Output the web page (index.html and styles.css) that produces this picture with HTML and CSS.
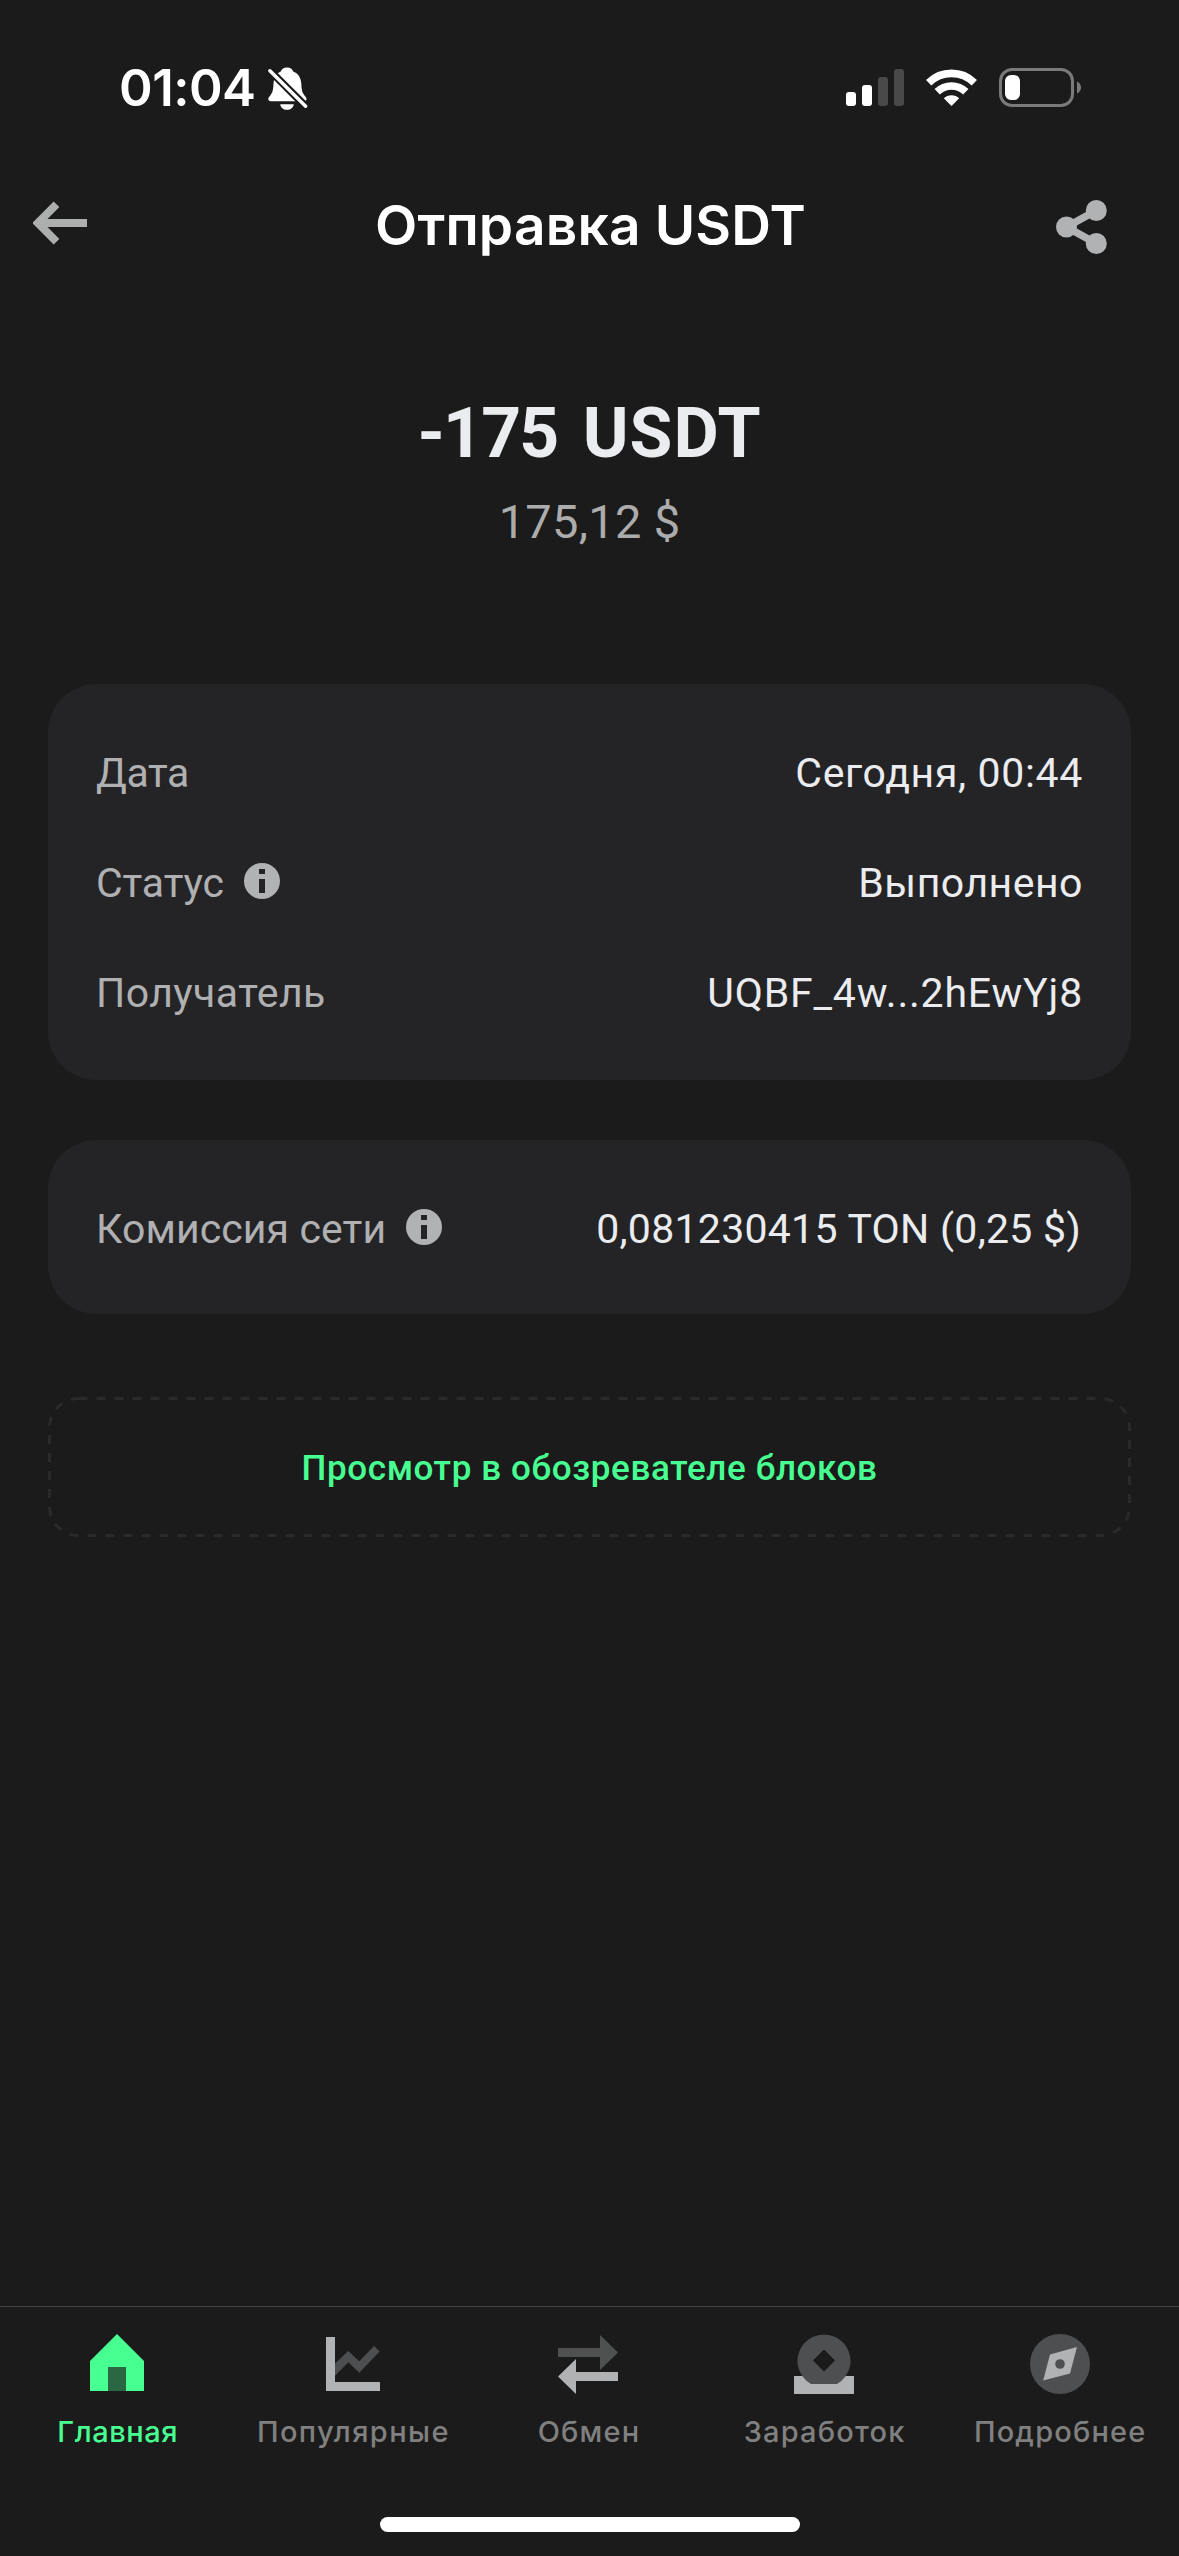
FILE: index.html
```html
<!DOCTYPE html>
<html lang="ru">
<head>
<meta charset="utf-8">
<title>Отправка USDT</title>
<link rel="stylesheet" href="styles.css">
</head>
<body>
<div class="screen">
  <div class="status-bar">
    <div class="clock">
      <span class="time">01:04</span>
      <svg class="bell" width="40" height="44" viewBox="0 0 40 44">
        <path fill="#fff" d="M19 .5c3.600 0 5.600 2 6.500 4.300 5 1.900 7.500 6.200 7.800 12 .3 6.500.9 9 3.200 11.600 1.200 1.400 2 2.300 2 3.600 0 1.400-1 2.200-2.700 2.200H3.200C1.200 34.200.3 33.300.3 32c0-1.300.8-2.200 2-3.600 2.300-2.600 2.900-5.100 3.200-11.600.3-5.800 2.500-10.100 7-12C13.400 2.500 15.400.5 19 .5zM12.200 37.200h13.600c-.5 3.400-3 5.600-6.800 5.600s-6.300-2.200-6.800-5.600z"/>
        <path stroke="#1b1b1b" stroke-width="7.600" d="M0 1.700 41 42.700"/>
        <path stroke="#fff" stroke-width="3.400" stroke-linecap="round" d="M1.900 3.700 37.600 39.200"/>
      </svg>
    </div>
    <div class="indicators">
      <svg width="58" height="38" viewBox="0 0 58 38">
        <rect y="23" width="10" height="14" rx="3" fill="#fff"/>
        <rect x="16" y="16" width="10" height="21" rx="3" fill="#fff"/>
        <rect x="32" y="8" width="10" height="29" rx="3" fill="#494949"/>
        <rect x="48" y="0" width="10" height="37" rx="3" fill="#494949"/>
      </svg>
      <svg class="wifi" width="51" height="38" viewBox="0 0 51 38">
        <g fill="none" stroke="#fff" stroke-width="7.600">
          <path d="M2.700 13.700a32.500 32.500 0 0 1 45.600 0"/>
          <path d="M11.200 22.800a20.500 20.500 0 0 1 28.600 0"/>
        </g>
        <path fill="#fff" d="M25.500 37 17.800 29.300a11 11 0 0 1 15.400 0z"/>
      </svg>
      <svg class="battery" width="83" height="40" viewBox="0 0 83 40">
        <rect x="1.500" y="1.500" width="72" height="36" rx="11.500" fill="none" stroke="#7a7a7a" stroke-width="3"/>
        <rect x="6" y="7" width="15" height="25" rx="6" fill="#fff"/>
        <path fill="#7a7a7a" d="M78 13.500c2.500 1 4 3.400 4 6s-1.500 5-4 6z"/>
      </svg>
    </div>
  </div>

  <header class="header">
    <svg class="back" width="56" height="44" viewBox="0 0 56 44">
      <path fill="none" stroke="#adafae" stroke-width="8" d="M54 22H7M23.500 3.300 5 22l18.500 18.700"/>
    </svg>
    <h1 class="title">Отправка USDT</h1>
    <svg class="share" width="52" height="54" viewBox="0 0 52 54">
      <path fill="none" stroke="#b0b2b4" stroke-width="7.500" d="M40.300 10.500 10.500 27l29.800 16.500"/>
      <g fill="#b0b2b4"><circle cx="40.300" cy="10.500" r="10.500"/><circle cx="10.500" cy="27" r="10.500"/><circle cx="40.300" cy="43.500" r="10.500"/></g>
    </svg>
  </header>

  <main class="content">
    <section class="summary">
      <div class="amount"><span class="amount-number">-175</span> USDT</div>
      <div class="fiat">175,12 $</div>
    </section>

    <section class="card">
      <div class="row">
        <span class="label label-date">Дата</span>
        <span class="value value-date">Сегодня, 00:44</span>
      </div>
      <div class="row">
        <span class="label label-status">Статус</span>
        <svg class="info" width="36" height="36" viewBox="0 0 36 36"><circle cx="18" cy="18" r="18" fill="#b0b2b3"/><path fill="#242426" d="M15 6h6v5h-6zM15 16h6v14h-6z"/></svg>
        <span class="value">Выполнено</span>
      </div>
      <div class="row">
        <span class="label label-recipient">Получатель</span>
        <span class="value value-address">UQBF_4w...2hEwYj8</span>
      </div>
    </section>

    <section class="card card-fee">
      <div class="row">
        <span class="label label-fee">Комиссия сети</span>
        <svg class="info" width="36" height="36" viewBox="0 0 36 36"><circle cx="18" cy="18" r="18" fill="#b0b2b3"/><path fill="#242426" d="M15 6h6v5h-6zM15 16h6v14h-6z"/></svg>
        <span class="value value-fee">0,081230415 TON (0,25 $)</span>
      </div>
    </section>

    <a class="explorer">
      <svg class="explorer-outline" width="1083" height="140" viewBox="0 0 1083 140">
        <rect x="1.500" y="1.500" width="1080" height="137" rx="29" fill="none" stroke="#2a2a2b" stroke-width="3" stroke-dasharray="9 9"/>
      </svg>
      <span>Просмотр в обозревателе блоков</span>
    </a>
  </main>

  <nav class="tabs">
    <div class="tab tab-active">
      <svg width="72" height="72" viewBox="0 0 72 72">
        <path fill="#48ff91" d="M36 6 63 33v30H9V33z"/><path fill="#2a6843" d="M27 39h18v24H27z"/>
      </svg>
      <span>Главная</span>
    </div>
    <div class="tab">
      <svg width="72" height="72" viewBox="0 0 72 72">
        <path fill="#4d4e50" d="M18 35.500 31.300 23l11 10.200L57 18l5.700 5.500-20.400 21.200-11-10.400L18 47.700z"/>
        <path fill="#b0b2b4" d="M9 9h9v45h45v9H9z"/>
      </svg>
      <span class="wide">Популярные</span>
    </div>
    <div class="tab">
      <svg width="72" height="72" viewBox="0 0 72 72">
        <path fill="#4f5050" d="M6 20h42V7L66 24.500 48 42V29H6z"/>
        <path fill="#b0b2b4" d="M66 44H24V31L6 48.500 24 66V53h42z"/>
      </svg>
      <span>Обмен</span>
    </div>
    <div class="tab">
      <svg width="72" height="72" viewBox="0 0 72 72">
        <path fill="#b0b2b4" d="M6 48h60v18H6z"/>
        <path fill="#4d4f51" fill-rule="evenodd" d="M23 56a26.500 26.500 0 1 1 26 0zM36 21.500 47 32.500 36 43.500 25 32.500z"/>
      </svg>
      <span>Заработок</span>
    </div>
    <div class="tab">
      <svg width="72" height="72" viewBox="0 0 72 72">
        <circle cx="36" cy="36" r="30" fill="#4d4f51"/>
        <path fill="#b0b2b4" d="M53 19 46 45.500 19.200 52.600 26 26.500z"/>
        <circle cx="36" cy="36" r="4.800" fill="#4d4f51"/>
      </svg>
      <span>Подробнее</span>
    </div>
  </nav>
  <div class="home-indicator"></div>
</div>
</body>
</html>
```
FILE: styles.css
```css
* { box-sizing: border-box; }

body {
  margin: 0;
  background: #1b1b1b;
  color: #ebecef;
  font-family: Roboto, sans-serif;
  font-kerning: normal;
}

svg { display: block; flex: none; }

.screen {
  width: 1179px;
  height: 2556px;
  display: flex;
  flex-direction: column;
  overflow: hidden;
  white-space: nowrap;
}

/* Status bar */
.status-bar {
  height: 176px;
  display: flex;
  justify-content: space-between;
  align-items: center;
  padding: 0 97px 0 119px;
}

.clock, .indicators { display: flex; align-items: center; }

.time {
  width: 149px;
  font: 600 51px/60px Inter, sans-serif;
  letter-spacing: -0.5px;
  color: #fff;
}

.bell { margin-top: 1px; }
.wifi { margin-left: 22px; }
.battery { margin-left: 22px; }

/* Header */
.header {
  height: 98px;
  display: flex;
  align-items: center;
  justify-content: space-between;
  padding: 0 71px 0 33px;
}

.back { margin-top: -4px; }
.share { margin-top: 4px; }

.title {
  margin: 0;
  padding-left: 36px;
  font: 600 55px/70px Inter, sans-serif;
  letter-spacing: 0.19px;
  color: #fff;
}

/* Transaction */
.content {
  flex: 1;
  display: flex;
  flex-direction: column;
  padding: 117px 48px 0;
}

.summary {
  height: 293px;
  display: flex;
  flex-direction: column;
  align-items: center;
  gap: 17px;
}

.amount { font-size: 69.6px; line-height: 84px; font-weight: 700; letter-spacing: 1px; word-spacing: 7px; }
.amount-number { letter-spacing: -1.8px; }
.fiat { font-size: 47px; line-height: 60px; letter-spacing: 0.29px; color: #acacac; }

.card {
  width: 1083px;
  height: 396px;
  padding: 34px 48px 0;
  border-radius: 48px;
  background: #242426;
}

.card-fee { height: 174px; margin-top: 60px; }

.row {
  height: 110px;
  display: flex;
  align-items: center;
  font-size: 41px;
  line-height: 50px;
}

.label { color: #b0b0b2; }
.label-date { letter-spacing: -0.4px; }
.label-status { letter-spacing: -0.13px; }
.label-recipient { letter-spacing: 0.42px; }
.label-fee { letter-spacing: 0.1px; }

.info { margin: -4px 0 0 20px; }

.value { margin-left: auto; letter-spacing: 0.5px; }
.value-date { letter-spacing: 0.66px; }
.value-address { letter-spacing: 0.8px; }
.value-fee { margin-right: 2px; letter-spacing: 0.28px; }

.explorer {
  position: relative;
  width: 1083px;
  height: 140px;
  margin-top: 83px;
  padding-top: 4px;
  display: flex;
  align-items: center;
  justify-content: center;
  font-size: 35px;
  line-height: 44px;
  font-weight: 500;
  letter-spacing: 0.62px;
  color: #48ff91;
}

.explorer-outline { position: absolute; inset: 0; }

/* Tab bar */
.tabs {
  height: 211px;
  display: grid;
  grid-template-columns: repeat(5, 1fr);
  padding: 21px 1px 0 0;
  border-top: 1px solid #444;
}

.tab {
  display: flex;
  flex-direction: column;
  align-items: center;
  gap: 14px;
  font: 500 29px/36px Inter, sans-serif;
  letter-spacing: 1.17px;
  color: #808080;
}

.tab svg { margin-left: -1px; }
.wide { letter-spacing: 1.39px; }
.tab-active { letter-spacing: 0.56px; color: #48ff91; }

.home-indicator {
  width: 420px;
  height: 15px;
  margin: 0 auto 24px;
  border-radius: 8px;
  background: #fff;
}
```
